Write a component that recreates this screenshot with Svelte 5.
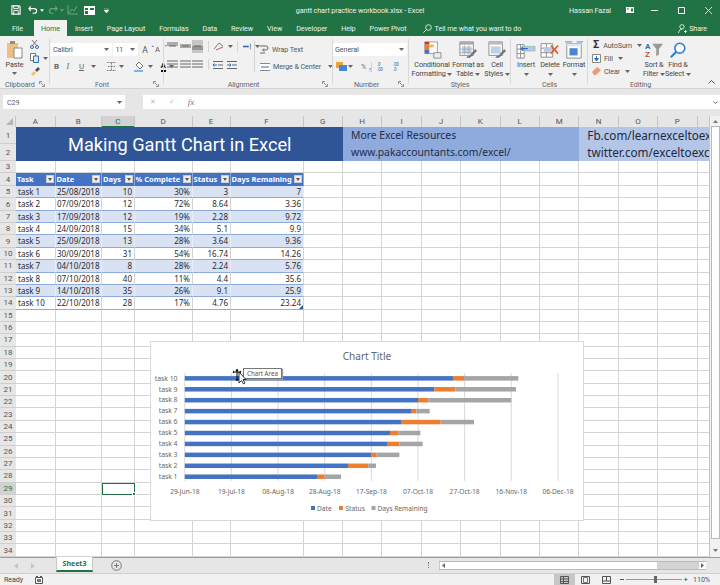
<script>
  const rows = [
    ['task 1','25/08/2018',10,'30%',3,7],
    ['task 2','07/09/2018',12,'72%',8.64,3.36],
    ['task 3','17/09/2018',12,'19%',2.28,9.72],
    ['task 4','24/09/2018',15,'34%',5.1,9.9],
    ['task 5','25/09/2018',13,'28%',3.64,9.36],
    ['task 6','30/09/2018',31,'54%',16.74,14.26],
    ['task 7','04/10/2018',8,'28%',2.24,5.76],
    ['task 8','07/10/2018',40,'11%',4.4,35.6],
    ['task 9','14/10/2018',35,'26%',9.1,25.9],
    ['task 10','22/10/2018',28,'17%',4.76,23.24]
  ];
  const heads = ['Task','Date','Days','% Complete','Status','Days Remaining'];
  const letters = 'ABCDEFGHIJKLMNOP'.split('').concat('');
  const tabs = ['Insert','Page Layout','Formulas','Data','Review','View','Developer','Help','Power Pivot'];
  const blank = Array.from({ length: 17 });
  const sheetRows = Array.from({ length: 32 }, (_, i) => i + 3);
  const ticks = ['29-Jun-18','19-Jul-18','08-Aug-18','28-Aug-18','17-Sep-18','07-Oct-18','27-Oct-18','16-Nov-18','06-Dec-18'];

  const PX = 2.332, X0 = 33.8;
  const dayOf = (s) => {
    const [d, m, y] = s.split('/').map(Number);
    return (Date.UTC(y, m - 1, d) - Date.UTC(2018, 5, 29)) / 86400000;
  };
  const bars = rows.map((r, i) => ({
    name: r[0],
    y: 36.3 + (9 - i) * 10.93 - 2.2,
    d: dayOf(r[1]) * PX,
    s: r[4] * PX,
    g: r[5] * PX
  })).reverse();
</script>

{#snippet caret()}<svg class="caret" viewBox="0 0 5 3" width="5" height="3"><path d="M0 0h5L2.5 3z" fill="#666"/></svg>{/snippet}

{#snippet launcher()}<svg class="launch" viewBox="0 0 6 6" width="6" height="6"><path d="M.5 3V.5H3M1.5 1.5l3 3M5.5 3v2.5H3" fill="none" stroke="#777" stroke-width=".8"/></svg>{/snippet}

{#snippet lines(a, b, c)}<svg viewBox="0 0 11 9" width="11" height="9"><path d="M0 {a}h11M{b} 4h{11 - 2 * b}M0 {c}h11" stroke="#666" fill="none"/></svg>{/snippet}

{#snippet big(kind)}
  <svg class="bigicon" viewBox="0 0 22 20" width="20" height="18">
    {#if kind === 'cond'}
      <path d="M3 1h14v13H3z" fill="#fff" stroke="#999"/><path d="M3 1h5v3H3z" fill="#c0392b"/><path d="M8 4h5v3H8z" fill="#f0b45a"/><path d="M3 4h5v6H3z" fill="#ed7d31"/><path d="M3 10h5v4H3z" fill="#4472c4"/><path d="M13 13h8v6h-8z" fill="#eee" stroke="#888"/>
    {:else if kind === 'table'}
      <path d="M2 1h15v15H2z" fill="#fff" stroke="#888"/><path d="M2 1h15v3H2z" fill="#aaa"/><path d="M4 6h11v8H4z" fill="#bdd0ea"/><path d="M7 4v12M12 4v12M2 9h15M2 13h15" stroke="#999" stroke-width=".6"/><path d="M11 18l8-9 2 2-8 8z" fill="#777"/><path d="M9 19l2-3 2 2z" fill="#4472c4"/>
    {:else if kind === 'styles'}
      <path d="M2 1h15v15H2z" fill="#fff" stroke="#888"/><path d="M2 1h15v3H2z" fill="#bbb"/><path d="M4 6h11v8H4z" fill="#bdd0ea"/><path d="M11 18l8-9 2 2-8 8z" fill="#777"/><path d="M9 19l2-3 2 2z" fill="#4472c4"/>
    {:else if kind === 'insert'}
      <path d="M1 4h8v15H1zM1 9h8M1 14h8M5 4v15" fill="#fff" stroke="#888"/><path d="M9 6h12v5H9z" fill="#b9cbe4" stroke="#9bb"/><path d="M13 8.500H6M8 6L5.500 8.500 8 11" fill="none" stroke="#2a6fb8" stroke-width="1.200"/>
    {:else if kind === 'delete'}
      <path d="M1 3h13v15H1zM1 8h13M1 13h13M7 3v15" fill="#fff" stroke="#888"/><path d="M4 7h9v5H4z" fill="#b9cbe4"/><path d="M12 5l8 9M20 5l-8 9" stroke="#e05a2b" stroke-width="1.800"/>
    {:else if kind === 'format'}
      <path d="M3 3h16v16H3z" fill="#fff" stroke="#888"/><path d="M3 3h16v3H3z" fill="#dfe6f0"/><path d="M6 8h9v8H6z" fill="#4a86d0"/><path d="M1 1h8M14 1h7" stroke="#4a86d0"/>
    {:else if kind === 'sort'}
      <text x="1" y="8.500" class="az a">A</text><text x="1" y="18" class="az z">Z</text><path d="M9 3h12l-4.500 6v6l-3 2V9z" fill="#999"/>
    {:else if kind === 'find'}
      <circle cx="13" cy="8" r="5.500" fill="#fff" stroke="#2a7fd0" stroke-width="1.800"/><path d="M9 12l-6 6" stroke="#2a7fd0" stroke-width="2.200"/>
    {/if}
  </svg>
{/snippet}

<div class="app">
  <header class="titlebar">
    <div class="qat">
      <svg viewBox="0 0 11 11" width="10" height="10"><path d="M1 1h8l1 1v8H1z" fill="none" stroke="#fff" stroke-width="1.200"/><path d="M3 1v3h5V1M3 10V6h5v4" fill="none" stroke="#fff"/></svg>
      <svg class="q7" viewBox="0 0 11 10" width="10" height="10"><path d="M3 1L1 3.500 3 6M1 3.500h6a2.500 2.500 0 0 1 0 5H5" fill="none" stroke="#fff" stroke-width="1.200"/></svg>
      <svg class="q2" viewBox="0 0 5 3" width="4" height="3"><path d="M0 0h5L2.500 3z" fill="#fff"/></svg>
      <svg class="q4" viewBox="0 0 11 10" width="10" height="10"><path d="M8 1l2 2.500L8 6M10 3.500H4a2.500 2.500 0 0 0 0 5h2" fill="none" stroke="#6ea284" stroke-width="1.200"/></svg>
      <svg class="q2" viewBox="0 0 5 3" width="4" height="3"><path d="M0 0h5L2.500 3z" fill="#6ea284"/></svg>
      <svg class="q3" viewBox="0 0 12 10" width="12" height="10"><path d="M1 0v9h10M2 8l3-4 2 2 3-5" fill="none" stroke="#6ea284"/></svg>
      <svg class="q5" viewBox="0 0 11 9" width="11" height="9"><path d="M0 0h11v9H0z" fill="#fff"/><path d="M1 2h3v2H1zM1 5h3v3H1z" fill="#217346"/><path d="M6 2h4v2H6z" fill="#217346"/></svg>
      <svg class="q9" viewBox="0 0 5 5" width="5" height="5"><path d="M0 0h5M0 2h5L2.500 5z" fill="#fff" stroke="#fff" stroke-width=".4"/></svg>
    </div>
    <div class="doc">gantt chart practice workbook.xlsx - Excel</div>
    <div class="win">
      <span class="user">Hassan Fazal</span>
      <svg viewBox="0 0 8 6" width="8" height="6"><path d="M0 0h8v6H0z" fill="#fff"/><path d="M1 1.500h2v1H1zM5 1.500h2v3H5z" fill="#217346"/></svg>
      <svg class="minb" viewBox="0 0 7 1" width="7" height="1"><path d="M0 .5h7" stroke="#fff"/></svg>
      <svg viewBox="0 0 7 7" width="7" height="7"><path d="M.5.500h6v6h-6z" fill="none" stroke="#fff"/></svg>
      <svg viewBox="0 0 7 7" width="7" height="7"><path d="M0 0l7 7M7 0L0 7" stroke="#cfe0d6"/></svg>
    </div>
  </header>

  <nav class="tabs">
    <span class="tab file">File</span>
    <span class="tab home">Home</span>
    {#each tabs as t}<span class="tab">{t}</span>{/each}
    <span class="tell">
      <svg viewBox="0 0 9 9" width="9" height="9"><circle cx="5.500" cy="3.500" r="2.800" fill="none" stroke="#fff" stroke-width=".8"/><path d="M3.500 5.500L.5 8.500" stroke="#fff"/></svg>
      Tell me what you want to do
    </span>
    <span class="share">
      <svg viewBox="0 0 9 9" width="9" height="9"><circle cx="4" cy="2.800" r="2.200" fill="none" stroke="#fff" stroke-width=".8"/><path d="M.5 9c.3-3 2-3.700 3.500-3.700M6 7.500h3M7.500 6v3" fill="none" stroke="#fff" stroke-width=".8"/></svg>
      Share
    </span>
  </nav>

  <section class="ribbon">
    <div class="group clip">
      <div class="body">
        <div class="paste">
          <svg viewBox="0 0 17 19" width="17" height="19"><path d="M1 3h11v15H1z" fill="#eec27e"/><path d="M4 1h5v3H4z" fill="#8d8d8d"/><path d="M8 8h8v10H8z" fill="#fff" stroke="#888"/></svg>
          <span>Paste</span>
          {@render caret()}
        </div>
        <div class="clipsmall">
          <svg viewBox="0 0 9 9" width="9" height="9"><path d="M2 0l5 6M7 0L2 6" stroke="#777"/><circle cx="2" cy="7" r="1.500" fill="none" stroke="#2a6fb8"/><circle cx="7" cy="7" r="1.500" fill="none" stroke="#2a6fb8"/></svg>
          <span class="inl"><svg viewBox="0 0 10 10" width="10" height="10"><path d="M.5.500h5v7h-5z" fill="#fff" stroke="#777"/><path d="M3.500 3h5v6.500h-5z" fill="#dfe9f5" stroke="#2a6fb8"/></svg>{@render caret()}</span>
          <svg viewBox="0 0 10 9" width="10" height="9"><path d="M1 7l3-3 2 2-3 3z" fill="#f0c36a"/><path d="M5 3l3-3 2 2-3 3z" fill="#555"/></svg>
        </div>
      </div>
      <div class="label lclip">Clipboard <span class="lnch">{@render launcher()}</span></div>
    </div>

    <div class="group font">
      <div class="body col">
        <div class="row r1">
          <span class="box fn">Calibri {@render caret()}</span>
          <span class="box fs">11 {@render caret()}</span>
          <span class="aa">A<sup>▲</sup></span>
          <span class="aa small">A<sup>▼</sup></span>
        </div>
        <div class="row r2">
          <b class="fmt">B</b><i class="fmt serif">I</i><u class="fmt">U</u>{@render caret()}
          <svg class="bd" viewBox="0 0 9 9" width="9" height="9"><path d="M0 .5h9M0 8.500h9M4.500 1v7M1 4.500h7" stroke="#777" stroke-dasharray="1 .5"/></svg>{@render caret()}
          <svg class="fill" viewBox="0 0 11 11" width="11" height="11"><path d="M5 1l4 4-3 3-4-4z" fill="#fff" stroke="#777"/><path d="M0 9h9v2H0z" fill="#7fb2e8"/></svg>{@render caret()}
          <span class="colorA">A</span>{@render caret()}
        </div>
      </div>
      <div class="label lfont">Font <span class="lnch">{@render launcher()}</span></div>
    </div>

    <div class="group align">
      <div class="body">
        <div class="col aligncol">
          <div class="row r1 ar">
            <span class="ib">{@render lines(1, 2, 3)}</span>
            <span class="ib">{@render lines(3, 2, 5)}</span>
            <span class="ib on">{@render lines(5, 2, 7)}</span>
            <i class="vsep"></i>
            <svg class="ori" viewBox="0 0 11 9" width="11" height="9"><path d="M1 7l5-6 4 3" fill="none" stroke="#777"/><path d="M3 8l7-3" stroke="#c55"/></svg>{@render caret()}
            <i class="vsep"></i>
            <svg class="ori" viewBox="0 0 11 7" width="9" height="7"><path d="M0 3.500h7" stroke="#2a6fb8" stroke-width="2"/><path d="M9 0v7" stroke="#777"/></svg>{@render caret()}
          </div>
          <div class="row r2 ar">
            <span class="ib">{@render lines(1, 0, 7)}</span>
            <span class="ib">{@render lines(1, 0, 7)}</span>
            <span class="ib">{@render lines(1, 0, 7)}</span>
            <i class="vsep"></i>
            <svg class="ind" viewBox="0 0 10 8" width="10" height="8"><path d="M0 .5h10M5 4h5M0 7.500h10" stroke="#666"/><path d="M4 4H0l1.500-1.500M0 4l1.500 1.500" stroke="#2a6fb8" fill="none"/></svg>
            <svg class="ind" viewBox="0 0 10 8" width="10" height="8"><path d="M0 .5h10M5 4h5M0 7.500h10" stroke="#666"/><path d="M0 4h4L2.500 2.500M4 4L2.500 5.500" stroke="#2a6fb8" fill="none"/></svg>
          </div>
        </div>
        <i class="tallsep"></i>
        <div class="col wrapcol">
          <div class="row wt"><svg viewBox="0 0 9 9" width="9" height="9"><path d="M0 1h6a2 2 0 0 1 0 4H3M4 3.500L2.500 5 4 6.500M0 8h5" fill="none" stroke="#666"/></svg><span>Wrap Text</span></div>
          <div class="row wt"><svg viewBox="0 0 10 8" width="10" height="8"><path d="M0 0h10v8H0z" fill="#fff"/><path d="M0 .5h10M0 7.500h10" stroke="#888"/><path d="M1 4h8" stroke="#2a6fb8"/></svg><span>Merge &amp; Center</span>{@render caret()}</div>
        </div>
      </div>
      <div class="label lalign">Alignment <span class="lnch">{@render launcher()}</span></div>
    </div>

    <div class="group num">
      <div class="body col">
        <span class="box gen">General {@render caret()}</span>
        <div class="row r2 nr">
          <svg viewBox="0 0 11 9" width="11" height="9"><path d="M0 0h7v6H0z" fill="#e8a33d"/><path d="M3 3h8v6H3z" fill="#4a86d0"/></svg>{@render caret()}
          <span class="pc">%</span><span class="pc c">,</span>
          <span class="dec">.0<br>.00</span><span class="dec">.00<br>.0</span>
        </div>
      </div>
      <div class="label lnum">Number <span class="lnch">{@render launcher()}</span></div>
    </div>

    <div class="group styles">
      <div class="body bigs sty">
        <div class="bigb w37">{@render big('cond')}<span>Conditional<br>Formatting {@render caret()}</span></div>
        <div class="bigb w32">{@render big('table')}<span>Format as<br>Table {@render caret()}</span></div>
        <div class="bigb w28">{@render big('styles')}<span>Cell<br>Styles {@render caret()}</span></div>
      </div>
      <div class="label">Styles</div>
    </div>

    <div class="group cells">
      <div class="body bigs">
        <div class="bigb w24">{@render big('insert')}<span>Insert<br>{@render caret()}</span></div>
        <div class="bigb w24">{@render big('delete')}<span>Delete<br>{@render caret()}</span></div>
        <div class="bigb w24">{@render big('format')}<span>Format<br>{@render caret()}</span></div>
      </div>
      <div class="label">Cells</div>
    </div>

    <div class="group editing">
      <div class="body">
        <div class="col edits">
          <div class="row ed"><b class="sig">Σ</b><span>AutoSum</span>{@render caret()}</div>
          <div class="row ed"><svg viewBox="0 0 9 9" width="9" height="9"><path d="M.5.500h8v8h-8z" fill="#fff" stroke="#888"/><path d="M4.500 2v4M2.500 4.500l2 2.500 2-2.500z" stroke="#2a6fb8" fill="#2a6fb8"/></svg><span>Fill</span>{@render caret()}</div>
          <div class="row ed"><svg viewBox="0 0 9 8" width="9" height="8"><path d="M0 5l5-5 4 3-5 5H2z" fill="#ee9a78"/></svg><span>Clear</span>{@render caret()}</div>
        </div>
        <div class="bigb w24">{@render big('sort')}<span>Sort &amp;<br>Filter {@render caret()}</span></div>
        <div class="bigb w24">{@render big('find')}<span>Find &amp;<br>Select {@render caret()}</span></div>
      </div>
      <div class="label">Editing</div>
    </div>
    <svg class="collapse" viewBox="0 0 7 4" width="7" height="4"><path d="M.5 3.500l3-3 3 3" fill="none" stroke="#555"/></svg>
  </section>

  <div class="formula">
    <div class="namebox">C29 {@render caret()}</div>
    <i class="grip"></i>
    <div class="fx">
      <span class="x">✕</span><span class="x">✓</span><span class="fxl">fx</span>
    </div>
    <div class="finput"><svg viewBox="0 0 5 3" width="5" height="3"><path d="M.5.500l2 2 2-2" fill="none" stroke="#666"/></svg></div>
  </div>

  <div class="work">
    <div class="sheet">
      <div class="corner"><svg viewBox="0 0 7 7" width="7" height="7"><path d="M7 0v7H0z" fill="#b4b4b4"/></svg></div>
      {#each letters as l}<div class="ch" class:hl={l === 'C'}>{l}</div>{/each}

      <div class="rh">1</div>
      <div class="bigtitle">Making Gantt Chart in Excel</div>
      <div class="merge m1"><div>More Excel Resources</div><div>www.pakaccountants.com/excel/</div></div>
      <div class="merge m2"><div>Fb.com/learnexceltoexcel</div><div>twitter.com/exceltoexcel</div></div>
      <div class="rh">2</div>

      {#each sheetRows as r}
        <div class="rh" class:hl={r === 29}>{r}</div>
        {#if r === 4}
          {#each heads as h}<div class="c th"><span>{h}</span><i class="fb"></i></div>{/each}
          {#each blank.slice(6) as _}<div class="c"></div>{/each}
        {:else if r >= 5 && r <= 14}
          {@const row = rows[r - 5]}
          {#each row as v, j}
            <div class="c td" class:band={r % 2 === 1} class:left={j === 0} class:lastr={r === 14 && j === 5}>{v}</div>
          {/each}
          {#each blank.slice(6) as _}<div class="c"></div>{/each}
        {:else}
          {#each blank as _, j}<div class="c" class:sel={r === 29 && j === 2}></div>{/each}
        {/if}
      {/each}

      <div class="chart">
        <svg viewBox="0 0 432 178" width="432" height="178">
          {#each ticks as t, i}
            <path d="M{X0 + i * 46.64} 31V139" stroke="#d9d9d9" fill="none"/>
            <text class="tick" x={X0 + i * 46.64} y="152" text-anchor="middle">{t}</text>
          {/each}
          <text class="ctitle" x="216" y="18" text-anchor="middle">Chart Title</text>
          {#each bars as b}
            <text class="tick lab" x="26.5" y={b.y + 4.5} text-anchor="end">{b.name}</text>
            <rect x={X0} y={b.y} width={b.d} height="4.500" fill="#4472c4"/>
            <rect x={X0 + b.d} y={b.y} width={b.s} height="4.500" fill="#ed7d31"/>
            <rect x={X0 + b.d + b.s} y={b.y} width={b.g} height="4.500" fill="#a5a5a5"/>
          {/each}
          <rect x="160" y="164" width="4" height="4" fill="#4472c4"/>
          <text class="tick" x="166" y="169">Date</text>
          <rect x="188" y="164" width="4" height="4" fill="#ed7d31"/>
          <text class="tick" x="194.500" y="169">Status</text>
          <rect x="220.500" y="164" width="4" height="4" fill="#a5a5a5"/>
          <text class="tick" x="226.500" y="169">Days Remaining</text>
        </svg>
        <div class="tip">Chart Area</div>
        <svg class="cursor" viewBox="0 0 12 16" width="12" height="16"><path d="M4 0v12M1 3h6" stroke="#000" fill="none"/><path d="M4 0L2.500 2h3zM1 1.500L-.5 3 1 4.500zM7 1.500L8.500 3 7 4.500zM4 12l-1.500-2h3z" fill="#000"/><path d="M6 3l0 11 2.500-2.500 2 3.500 1.500-1-2-3.500h3z" fill="#fff" stroke="#000" stroke-width=".8"/></svg>
      </div>
    </div>
    <div class="vscroll">
      <svg viewBox="0 0 5 3" width="5" height="3"><path d="M0 3h5L2.500 0z" fill="#777"/></svg>
      <div class="thumb"></div>
      <svg viewBox="0 0 5 3" width="5" height="3"><path d="M0 0h5L2.500 3z" fill="#777"/></svg>
    </div>
  </div>

  <div class="sheettabs">
    <span class="nav"><svg viewBox="0 0 4 6" width="4" height="6"><path d="M4 0v6L0 3z" fill="#c4c4c4"/></svg><svg viewBox="0 0 4 6" width="4" height="6"><path d="M0 0v6l4-3z" fill="#c4c4c4"/></svg></span>
    <span class="sheet3">Sheet3</span>
    <svg class="plus" viewBox="0 0 11 11" width="11" height="11"><circle cx="5.500" cy="5.500" r="4.800" fill="none" stroke="#777"/><path d="M5.500 3v5M3 5.500h5" stroke="#777"/></svg>
    <span class="dots"></span>
    <div class="hscroll">
      <span class="ab"><svg viewBox="0 0 3 5" width="3" height="5"><path d="M3 0v5L0 2.500z" fill="#666"/></svg></span>
      <span class="track"></span>
      <span class="hgrey"></span>
      <span class="ab"><svg viewBox="0 0 3 5" width="3" height="5"><path d="M0 0v5l3-2.500z" fill="#666"/></svg></span>
    </div>
  </div>

  <footer class="status">
    <span>Ready</span>
    <svg class="macro" viewBox="0 0 8 8" width="8" height="8"><path d="M.5 1.500h7v6h-7z" fill="#fff" stroke="#555"/><path d="M1 .5h2M5 .5h2" stroke="#555"/><path d="M2 3h4v3H2z" fill="#777"/></svg>
    <span class="views">
      <span class="vb on"><svg viewBox="0 0 9 8" width="9" height="8"><path d="M.5.500h8v7h-8zM.5 3h8M.5 5.500h8M3.500.500v7" fill="none" stroke="#555"/></svg></span>
      <span class="vb"><svg viewBox="0 0 9 8" width="9" height="8"><path d="M.5.500h8v7h-8z" fill="none" stroke="#555"/><path d="M2.500 1.500h4v5h-4z" fill="none" stroke="#777"/></svg></span>
      <span class="vb"><svg viewBox="0 0 9 8" width="9" height="8"><path d="M.5.500h8v7h-8zM.5 5h8M4.500 .5v4.500" fill="none" stroke="#555"/></svg></span>
    </span>
    <span class="zoomctl">
      <i class="mn"></i>
      <span class="slider"><i class="knob"></i></span>
      <span class="pl">+</span>
    </span>
    <span class="pct">110%</span>
  </footer>
  <div class="greenline"></div>
</div>

<style>
  :global(body) { margin: 0; background: #e6e6e6; }
  .app {
    width: 720px; height: 585px; overflow: hidden; display: flex; flex-direction: column;
    font-family: Roboto, "Liberation Sans", sans-serif; font-size: 7.200px; letter-spacing: -.1px; color: #444; background: #e6e6e6;
  }
  svg { display: block; flex: none; }

  .titlebar {
    height: 20px; flex: none; background: #217346; color: #fff;
    display: grid; grid-template-columns: minmax(0, 1fr) auto minmax(0, 1fr); align-items: center;
  }
  .qat { display: flex; align-items: center; padding-left: 11px; }
  .q7 { margin-left: 7px; }
  .q2 { margin-left: 2px; }
  .q4 { margin-left: 4px; }
  .q3 { margin-left: 3px; }
  .q5 { margin-left: 5px; }
  .q9 { margin-left: 9px; }
  .doc { color: #e9f1ec; }
  .win { display: flex; align-items: center; justify-content: flex-end; gap: 20px; padding-right: 8px; }
  .user { margin-right: -5px; color: #e9f1ec; }
  .minb { margin-left: -3px; }

  .tabs { height: 16px; flex: none; background: #217346; color: #e9f1ec; display: flex; align-items: stretch; }
  .tab { display: flex; align-items: center; margin-right: 14px; white-space: nowrap; }
  .tab.file { margin: 0 0 0 12px; width: 22px; }
  .tab.home { background: #f1f1f1; color: #217346; width: 33px; justify-content: center; margin-right: 8px; }
  .tell { display: flex; align-items: center; gap: 3px; margin-left: 2px; white-space: nowrap; }
  .share { display: flex; align-items: center; gap: 2px; margin-left: auto; padding-right: 13px; }

  .ribbon { height: 52px; flex: none; background: #f1f1f1; display: flex; border-bottom: 1px solid #d2d2d2; position: relative; box-sizing: content-box; }
  .group { display: flex; flex-direction: column; box-sizing: border-box; height: 52px; position: relative; }
  .group + .group::before { content: ""; position: absolute; left: -1px; top: 3px; bottom: 4px; width: 1px; background: #d8d8d8; }
  .body { flex: 1; display: flex; padding-top: 4px; min-height: 0; }
  .col { display: flex; flex-direction: column; }
  .row { display: flex; align-items: center; }
  .label { height: 10px; flex: none; display: flex; align-items: center; justify-content: center; color: #666; position: relative; margin-bottom: -1px; white-space: nowrap; }
  .lnch { position: absolute; right: 5px; top: 2px; }
  .lclip { justify-content: flex-start; padding-left: 5px; }
  .lfont { padding-right: 10px; }
  .lalign { padding-right: 10px; }
  .clip { width: 50px; }
  .font { width: 114px; }
  .align { width: 169px; }
  .num { width: 76px; }
  .styles { width: 102px; }
  .cells { width: 77px; }
  .editing { width: 105px; }

  .paste { width: 25px; display: flex; flex-direction: column; align-items: center; padding-left: 2px; }
  .paste span { margin-top: 1px; line-height: 9px; color: #444; }
  .paste .caret { margin-top: 3px; }
  .clipsmall { display: flex; flex-direction: column; gap: 4px; padding: 0 0 0 3px; }
  .inl { display: flex; align-items: center; gap: 3px; }
  .caret { display: inline-block; vertical-align: middle; }

  .font .body { padding: 7px 0 0 1px; gap: 4px; }
  .r1 { height: 13px; }
  .r2 { height: 13px; }
  .box { background: #fff; height: 13px; display: flex; align-items: center; justify-content: space-between; padding: 0 3px 0 2px; box-sizing: border-box; color: #555; }
  .fn { width: 62px; }
  .fs { width: 25px; margin-left: 1px; }
  .aa { font-size: 8.500px; margin-left: 4px; color: #555; width: 9px; position: relative; }
  .aa sup { position: absolute; font-size: 3px; color: #2a6fb8; top: -1px; right: -3px; line-height: 4px; }
  .aa.small { font-size: 7.500px; }
  .font .r2 { padding-left: 3px; }
  .fmt { width: 12.500px; font-size: 8px; color: #666; text-align: left; flex: none; }
  .serif { font-family: "Liberation Serif", serif; }
  .r2 .caret { margin-left: -1px; }
  .bd { margin-left: 11px; margin-right: 4px; }
  .fill { margin-left: 10px; margin-right: 4px; }
  .colorA { margin-left: 8px; margin-right: 4px; font-size: 8px; font-weight: 700; color: #222; border-bottom: 2px solid #111; line-height: 8px; width: 9px; text-align: center; }

  .align .body { padding: 4px 0 0 3px; }
  .aligncol { width: 86px; gap: 5px; flex: none; }
  .ar { height: 13px; gap: 1.500px; }
  .ib { width: 11px; height: 13px; display: flex; align-items: center; justify-content: center; }
  .ib.on { background: #c6c6c6; }
  .vsep { width: 1px; height: 11px; background: #d4d4d4; margin: 0 3px 0 3px; flex: none; }
  .ori { margin-right: 2px; }
  .ind { margin-right: 2px; }
  .tallsep { width: 1px; background: #d4d4d4; height: 31px; margin-top: 1px; margin-left: 1px; flex: none; }
  .wrapcol { gap: 4px; padding: 3px 0 0 5px; }
  .wt { gap: 3px; height: 13px; color: #555; white-space: nowrap; }
  .wt .caret { margin-left: 4px; }

  .num .body { padding: 7px 2px 0 0; gap: 4px; }
  .gen { width: 74px; flex: none; }
  .nr { padding-left: 3px; gap: 2px; }
  .pc { margin-left: 6px; color: #777; }
  .pc.c { margin-left: 1px; font-weight: 700; }
  .dec { font-size: 4.500px; line-height: 5px; color: #2a6fb8; margin-left: 3px; width: 11px; }
  .lnum { justify-content: flex-start; padding-left: 21px; }

  .bigs { padding-left: 3px; }
  .sty { padding-left: 4px; }
  .bigb { display: flex; flex-direction: column; align-items: center; text-align: center; flex: none; }
  .bigicon { margin-top: 1px; }
  .bigb span { line-height: 9px; margin-top: 1px; white-space: nowrap; color: #444; }
  .w37 { width: 38px; }
  .w32 { width: 34px; }
  .w28 { width: 26px; margin-left: -1px; }
  .w24 { width: 24px; }
  .az { font: 700 9px Roboto, sans-serif; }
  .az.a { fill: #2a6fb8; }
  .az.z { fill: #c0504d; }

  .edits { width: 54px; padding-left: 4px; gap: .5px; box-sizing: border-box; margin-top: -1px; flex: none; }
  .ed { height: 12.500px; gap: 3px; color: #555; }
  .ed .caret { margin-left: 2px; }
  .sig { font-size: 11px; line-height: 10px; color: #333; width: 9px; text-align: center; }
  .collapse { position: absolute; right: 5px; bottom: 4px; }

  .formula { height: 14px; flex: none; margin-top: 6px; display: flex; align-items: stretch; }
  .namebox { width: 122px; margin-left: 3px; background: #fff; display: flex; align-items: center; justify-content: space-between; padding: 0 3px 0 4px; box-sizing: border-box; color: #666; }
  .grip { width: 18px; flex: none; }
  .fx { width: 60px; background: #fff; flex: none; display: flex; align-items: center; gap: 13px; padding-left: 7px; box-sizing: border-box; color: #bbb; font-size: 7px; }
  .fxl { color: #777; font: italic 9px "Liberation Serif", serif; }
  .finput { flex: 1; background: #fff; display: flex; justify-content: flex-end; align-items: center; padding-right: 2px; }

  .work { flex: none; height: 441px; margin-top: 7px; display: flex; }
  .sheet {
    width: 709px; flex: none; background: #fff; position: relative; overflow: hidden; display: grid;
    grid-template-columns: 16px 39.500px 46.500px 32.500px 58px 38px 73px 39.500px repeat(10, 39.400px);
    grid-template-rows: 11px 17px 17px 12px 13px repeat(30, 12.370px);
    font-family: "Noto Sans", sans-serif; font-size: 8px; letter-spacing: 0; color: #333;
  }
  .corner { background: #e6e6e6; display: flex; justify-content: flex-end; align-items: flex-end; padding: 0 2px 2px 0; border-right: 1px solid #c6c6c6; }
  .ch { background: #e6e6e6; text-align: center; line-height: 11px; border-right: 1px solid #c6c6c6; box-sizing: border-box; color: #555; font-family: Roboto, sans-serif; }
  .ch.hl { background: #d2d2d2; box-shadow: inset 0 -1px #217346; color: #217346; }
  .rh { background: #e6e6e6; text-align: center; color: #555; display: flex; align-items: center; justify-content: center; grid-column: 1; border-bottom: 1px solid #cfcfcf; box-sizing: border-box; font-size: 8px; overflow: hidden; font-family: Roboto, sans-serif; }
  .rh.hl { background: #d2d2d2; color: #217346; }
  .bigtitle {
    grid-column: 2 / span 7; grid-row: 2 / span 2; background: #2f5597; color: #fff;
    font: 18.200px Roboto, sans-serif; display: flex; align-items: center; padding-left: 52px;
  }
  .merge { grid-row: 2 / span 2; display: flex; flex-direction: column; justify-content: space-around; font-size: 10.350px; color: #1f2d48; padding: 0 0 0 8px; overflow: hidden; white-space: nowrap; }
  .merge div { line-height: 17px; }
  .m1 { grid-column: 9 / span 6; background: #8faadc; }
  .m2 { grid-column: 15 / span 4; background: #b4c6e7; color: #1c2a3f; font-size: 11.700px; padding-left: 8px; }
  .c { border-right: 1px solid #d4d4d4; border-bottom: 1px solid #d4d4d4; box-sizing: border-box; min-width: 0; position: relative; }
  .c.sel { outline: 1.500px solid #217346; outline-offset: -1px; z-index: 1; }
  .c.sel::after { content: ""; position: absolute; right: -2px; bottom: -2px; background: #217346; border: 1px solid #fff; box-sizing: content-box; width: 2px; height: 2px; }
  .th { background: #4472c4; color: #fff; font-weight: 700; display: flex; align-items: center; justify-content: space-between; padding: 0 1px; border-color: #4472c4; border-right-color: #8faadc; font-size: 7.500px; white-space: nowrap; overflow: hidden; }
  .fb { width: 8px; height: 8px; background: #eceef2; flex: none; border: 1px solid #ccc; box-sizing: border-box; position: relative; }
  .fb::after { content: ""; position: absolute; left: 1px; top: 2px; border: 2px solid transparent; border-top: 3px solid #555; border-bottom: 0; }
  .td { text-align: right; padding-right: 1.500px; line-height: 12px; border-bottom-color: #8eaadb; overflow: hidden; white-space: nowrap; color: #2b2b2b; }
  .td.left { text-align: left; padding-left: 2px; }
  .td.band { background: #d9e2f3; border-right-color: #e8edf7; }
  .lastr::after { content: ""; position: absolute; right: 0; bottom: 0; border: 2px solid transparent; border-right-color: #2f5597; border-bottom-color: #2f5597; }

  .chart { position: absolute; left: 150.500px; top: 226px; width: 432px; height: 178px; background: #fff; outline: 1px solid #d9d9d9; z-index: 2; }
  .chart text { font-family: "Noto Sans", sans-serif; }
  .tick { font-size: 6.600px; fill: #666; }
  .lab { font-size: 6.800px; }
  .ctitle { font-size: 10px; fill: #666; }
  .tip { position: absolute; left: 92.500px; top: 26px; background: #fff; border: 1px solid #777; box-shadow: 1px 1px 1px #999; font-family: "Noto Sans", sans-serif; font-size: 6.200px; padding: 0 3px; line-height: 9px; color: #555; white-space: nowrap; }
  .cursor { position: absolute; left: 82px; top: 27px; overflow: visible; }

  .vscroll { flex: 1; background: #f1f1f1; display: flex; flex-direction: column; align-items: center; padding-top: 4px; box-sizing: border-box; border-left: 1px solid #c6c6c6; }
  .thumb { width: 9px; height: 413px; background: #fff; border: 1px solid #b8b8b8; box-sizing: border-box; margin: 3px 0 10px; }

  .sheettabs { height: 16px; flex: none; display: flex; align-items: flex-start; border-top: 1px solid #9e9e9e; box-sizing: border-box; background: #e6e6e6; position: relative; }
  .nav { width: 56px; flex: none; display: flex; gap: 13px; padding: 5px 0 0 14px; box-sizing: border-box; }
  .sheet3 { width: 37px; height: 15px; background: #fff; color: #217346; font-weight: 700; font-family: "Noto Sans", sans-serif; display: flex; align-items: center; justify-content: center; box-sizing: border-box; border-bottom: 2px solid #217346; border-left: 1px solid #c6c6c6; border-right: 1px solid #c6c6c6; margin-top: -1px; font-size: 7px; letter-spacing: 0; }
  .plus { margin: 2px 0 0 18px; }
  .dots { width: 1px; height: 6px; margin: 4px 0 0 306px; border-left: 1px dotted #777; }
  .hscroll { margin: 3px 0 0 9px; width: 267px; height: 9px; display: flex; align-items: stretch; border-top: 1px solid #bbb; border-bottom: 1px solid #bbb; box-sizing: border-box; }
  .ab { width: 8px; flex: none; background: #fff; display: flex; align-items: center; justify-content: center; box-sizing: border-box; border-left: 1px solid #ccc; }
  .track { flex: 1; background: #fff; }
  .hgrey { width: 41px; background: #d4d4d4; flex: none; }

  .status { height: 11px; flex: none; background: #f1f1f1; display: flex; align-items: center; padding-left: 4px; border-top: 1px solid #cfcfcf; box-sizing: content-box; color: #444; position: relative; }
  .macro { margin-left: 12px; }
  .views { display: flex; position: absolute; left: 554px; top: 0; align-items: stretch; height: 11px; }
  .vb { width: 21px; display: flex; align-items: center; justify-content: center; }
  .vb.on { background: #c6c6c6; }
  .zoomctl { display: flex; align-items: center; margin-left: auto; }
  .mn { width: 4px; height: 1px; background: #555; }
  .slider { width: 56px; height: 1px; background: #999; position: relative; margin: 0 2px; }
  .knob { position: absolute; left: 28px; top: -3px; width: 3px; height: 7px; background: #666; }
  .pl { font-size: 8px; }
  .pct { margin-left: 5px; color: #555; padding-right: 10px; }
  .greenline { height: 1px; flex: none; background: #6fa287; }
</style>
